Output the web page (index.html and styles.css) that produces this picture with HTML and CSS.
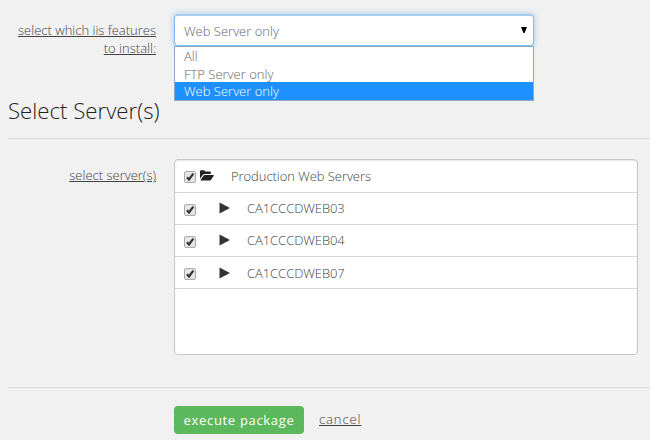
FILE: index.html
```html
<!DOCTYPE html>
<html lang="en">
<head>
<meta charset="utf-8">
<title>Execute package</title>
<link rel="stylesheet" href="styles.css">
</head>
<body>
<svg class="defs" width="0" height="0" aria-hidden="true">
  <symbol id="check" viewBox="0 0 12 12"><path d="M3 6.3 5 8.5 9.3 2.7" fill="none" stroke="#333" stroke-width="2.2"/></symbol>
  <symbol id="arrow" viewBox="0 0 11 12"><path d="M0.5 0.5 11 6 0.5 11.5z" fill="#333"/></symbol>
</svg>
<main class="form">
  <section class="row features">
    <div class="label features-label"><span>select which iis features</span><br><span>to install:</span></div>
    <div class="dropdown">
      <div class="select"><span class="select-text">Web Server only</span><svg class="caret" viewBox="0 0 6 6"><path d="M0 0h6L3.6 6H2.4z"/></svg></div>
      <ul class="menu">
        <li><span>All</span></li>
        <li><span>FTP Server only</span></li>
        <li class="active"><span>Web Server only</span></li>
      </ul>
    </div>
  </section>
  <h2 class="title"><span>Select Server(s)</span></h2>
  <section class="row servers">
    <div class="label servers-label"><span>select server(s)</span></div>
    <div class="tree">
      <div class="node group"><span class="box"><svg><use href="#check"/></svg></span><svg class="folder" viewBox="0 0 14 11"><path d="M0 8.8V1.2Q0 .2 1 .2H3.9Q4.8.2 4.8 1.2V1.6H9.8Q10.8 1.6 10.8 2.6V3.9H5Q3.5 3.9 2.7 5.1zM.5 10.3 3.4 5.8Q3.9 5 5 5H13.2Q14.2 5 13.6 5.9L11.3 9.5Q10.7 10.4 9.6 10.4H.7z" fill="#222"/></svg><span class="name">Production Web Servers</span></div>
      <div class="node"><span class="box"><svg><use href="#check"/></svg></span><svg class="arrow"><use href="#arrow"/></svg><span class="name">CA1CCCDWEB03</span></div>
      <div class="node"><span class="box"><svg><use href="#check"/></svg></span><svg class="arrow"><use href="#arrow"/></svg><span class="name">CA1CCCDWEB04</span></div>
      <div class="node"><span class="box"><svg><use href="#check"/></svg></span><svg class="arrow"><use href="#arrow"/></svg><span class="name">CA1CCCDWEB07</span></div>
    </div>
  </section>
  <footer class="actions"><button class="execute"><span>execute package</span></button><a class="cancel">cancel</a></footer>
</main>
</body>
</html>
```
FILE: styles.css
```css
* { box-sizing: border-box; }
body { margin: 0; background: #f1f1f1; color: #444; font: 300 13px/18px "Open Sans", sans-serif; overflow: hidden; }
.defs { display: block; }
.form { height: 440px; padding: 14px 0 0 8px; }
.row { display: grid; grid-template-columns: 148px 1fr; column-gap: 18px; }
.features { height: 80px; }
.label { text-align: right; text-decoration: underline; }
.features-label { padding-top: 7px; }
.dropdown { width: 360px; }
.select { height: 32px; display: flex; align-items: center; justify-content: space-between; padding: 2px 6px 0 9px; background: #fff; border: 1px solid #7dbcf0; border-top: 2px solid #a6cdee; border-radius: 4px; box-shadow: 0 0 6px rgba(102,175,233,.6); color: #666; }
.select-text { margin-top: -1px; }
.caret { width: 6px; height: 6px; margin-top: -4px; }
.menu { position: relative; margin: 0; padding: 0; list-style: none; height: 55px; background: #fff; border: 1px solid #8da9c6; color: #666; }
.menu li { height: 17.5px; line-height: 18px; padding-left: 9px; }
.menu .active { height: 18px; background: #1e90ff; color: #fff; }
.title { margin: 0; height: 45px; border-bottom: 1px solid #d8d8d8; font-size: 22.2px; line-height: 33px; font-weight: 300; color: #222; }
.servers { padding-top: 20px; }
.servers-label { padding-top: 7px; }
.tree { width: 464px; height: 196px; background: #fff; border: 1px solid #c8c8c8; border-radius: 4px; box-shadow: inset 0 1px 2px rgba(0,0,0,.1); }
.node { height: 32.25px; display: flex; align-items: center; border-bottom: 1px solid #d8d8d8; padding-left: 9px; color: #444; }
.group { height: 32.5px; }
.name { letter-spacing: -.06px; }
.box { width: 12px; height: 12px; margin-top: 3px; border: 1px solid #aaa; border-radius: 2px; background: #e5e5e5; display: flex; }
.box svg { width: 12px; height: 12px; margin: -1px; flex: none; }
.folder { width: 14px; height: 11px; margin: 0 17px 0 4px; }
.arrow { width: 11px; height: 12px; margin: 0 17px 0 23px; }
.actions { height: 66px; margin-top: 32px; padding: 18px 0 0 166px; border-top: 1px solid #d8d8d8; display: flex; align-items: flex-start; letter-spacing: .9px; }
.execute { width: 130px; height: 28px; padding: 0 0 1px; border: 0; border-radius: 4px; background: #5cb85c; color: #fff; font: 400 13px/18px "Open Sans", sans-serif; letter-spacing: .68px; }
.cancel { margin: 4px 0 0 15px; text-decoration: underline; }
```
